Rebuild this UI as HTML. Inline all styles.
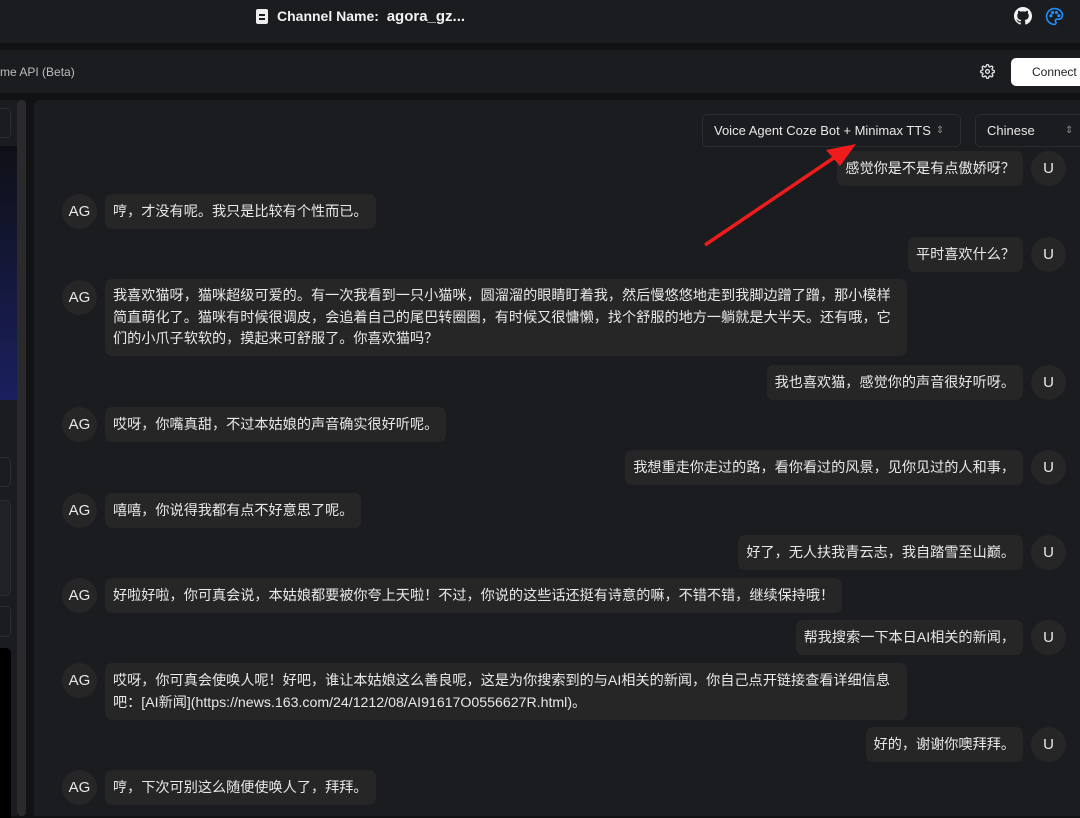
<!DOCTYPE html>
<html><head><meta charset="utf-8"><style>
*{margin:0;padding:0;box-sizing:border-box}
body{width:1080px;height:816px;overflow:hidden;background:#111214;font-family:"Liberation Sans","Noto Sans CJK SC",sans-serif;color:#e6e6e6;position:relative}
.abs{position:absolute}
.top{left:0;top:0;width:1080px;height:43px;background:#1b1c20}
.bar2{left:0;top:50px;width:1080px;height:43px;background:#1b1c20}
.chat{left:34px;top:100px;width:1046px;height:716px;background:#1b1c20;border-radius:6px 0 0 0}
.lp{left:0;top:100px;width:17px;height:716px;background:#1b1c20}
.sb{left:17px;top:100px;width:9px;height:716px;background:#2a2a2c;border-radius:4px}
.b{position:absolute;background:#262626;border-radius:7px;padding:0 8px;font-size:14.15px;line-height:21.5px;color:#e8e8e8;white-space:nowrap;display:flex;align-items:center}
.m{display:block;padding-top:6px}
.av{position:absolute;width:35px;height:35px;border-radius:50%;background:#262626;color:#e8e8e8;font-size:15px;display:flex;align-items:center;justify-content:center}
.u{left:1031px}.a{left:62px}
.sel{position:absolute;top:114px;height:33px;border:1px solid #2c2d31;border-radius:5px;background:#1b1c20;font-size:13px;color:#e8e8e8;display:flex;align-items:center;padding-left:11px}
</style></head><body>
<div class="abs top"></div>
<div class="abs" style="left:256px;top:9px;width:12px;height:15px;background:#eee;border-radius:2px"></div>
<div class="abs" style="left:259px;top:14px;width:6px;height:1.5px;background:#1b1c20"></div>
<div class="abs" style="left:259px;top:18px;width:6px;height:1.5px;background:#1b1c20"></div>
<div class="abs" style="left:277px;top:8px;font-size:14px;font-weight:bold;color:#f2f2f2">Channel Name:&nbsp; <span style="font-size:15px">agora_gz...</span></div>
<svg class="abs" style="left:1014px;top:7px" width="18" height="18" viewBox="0 0 16 16"><path fill="#f2f2f2" d="M8 0C3.58 0 0 3.580 0 8c0 3.54 2.29 6.53 5.47 7.59.4.07.55-.17.55-.38 0-.19-.01-.82-.01-1.49-2.01.37-2.53-.49-2.69-.94-.09-.23-.48-.94-.82-1.13-.28-.15-.68-.52-.01-.53.63-.01 1.08.58 1.23.82.72 1.21 1.87.87 2.33.66.07-.52.28-.87.51-1.07-1.78-.2-3.64-.89-3.64-3.95 0-.87.31-1.59.82-2.15-.08-.2-.36-1.02.08-2.12 0 0 .67-.21 2.2.82.64-.18 1.32-.27 2-.27s1.36.09 2 .27c1.53-1.04 2.2-.82 2.2-.82.44 1.1.16 1.92.08 2.12.51.56.82 1.27.82 2.15 0 3.07-1.87 3.75-3.65 3.95.29.25.54.73.54 1.48 0 1.07-.01 1.93-.01 2.2 0 .21.15.46.55.38A8.01 8.01 0 0016 8c0-4.42-3.58-8-8-8z"/></svg>
<svg class="abs" style="left:1045px;top:7px" width="19" height="19" viewBox="0 0 24 24" fill="none" stroke="#1e90ff" stroke-width="2"><path d="M12 2a10 10 0 000 20c1.1 0 2-.9 2-2 0-.5-.2-1-.5-1.3-.3-.4-.5-.8-.5-1.3 0-1.1.9-2 2-2h2.4c3 0 4.6-2.4 4.6-5C22 5.6 17.5 2 12 2z"/><circle cx="7.5" cy="11" r="1"/><circle cx="9.5" cy="7" r="1"/><circle cx="14.5" cy="7" r="1"/><circle cx="17.5" cy="11" r="1"/></svg>
<div class="abs bar2"></div>
<div class="abs" style="left:0;top:65px;font-size:12px;color:#bdbdbd">me API (Beta)</div>
<svg class="abs" style="left:980px;top:64px" width="15" height="15" viewBox="0 0 24 24" fill="none" stroke="#eee" stroke-width="2"><circle cx="12" cy="12" r="3"/><path d="M19.4 15a1.7 1.7 0 00.3 1.8l.1.1a2 2 0 11-2.8 2.8l-.1-.1a1.7 1.7 0 00-1.8-.3 1.7 1.7 0 00-1 1.5V21a2 2 0 11-4 0v-.1a1.7 1.7 0 00-1.1-1.5 1.7 1.7 0 00-1.8.3l-.1.1a2 2 0 11-2.8-2.8l.1-.1a1.7 1.7 0 00.3-1.8 1.7 1.7 0 00-1.5-1H3a2 2 0 110-4h.1a1.7 1.7 0 001.5-1.1 1.7 1.7 0 00-.3-1.8l-.1-.1a2 2 0 112.8-2.8l.1.1a1.7 1.7 0 001.8.3H9a1.7 1.7 0 001-1.5V3a2 2 0 114 0v.1a1.7 1.7 0 001 1.5 1.7 1.7 0 001.8-.3l.1-.1a2 2 0 112.8 2.8l-.1.1a1.7 1.7 0 00-.3 1.8V9a1.7 1.7 0 001.5 1H21a2 2 0 110 4h-.1a1.7 1.7 0 00-1.5 1z"/></svg>
<div class="abs" style="left:1011px;top:58px;width:80px;height:28px;background:#fff;border-radius:5px;color:#222;font-size:12px;padding:7px 0 0 21px">Connect</div>
<div class="abs lp"><div style="position:absolute;left:0;top:46px;width:17px;height:254px;background:linear-gradient(#0f1016,#1a1f5e)"></div>
<div style="position:absolute;left:0;top:357px;width:11px;height:30px;border:1px solid #2c2d31;border-left:none;border-radius:0 5px 5px 0"></div>
<div style="position:absolute;left:0;top:400px;width:11px;height:96px;border:1px solid #2c2d31;border-left:none;background:#202125;border-radius:0 5px 5px 0"></div>
<div style="position:absolute;left:0;top:506px;width:11px;height:31px;border:1px solid #2c2d31;border-left:none;border-radius:0 5px 5px 0"></div>
<div style="position:absolute;left:0;top:548px;width:11px;height:170px;background:#000;border-radius:0 5px 0 0"></div>
<div style="position:absolute;left:0;top:8px;width:11px;height:30px;border:1px solid #2c2d31;border-left:none;border-radius:0 5px 5px 0"></div></div>
<div class="abs sb"></div>
<div class="abs chat"></div>
<div class="sel" style="left:702px;width:259px">Voice Agent Coze Bot + Minimax TTS <span style="color:#888;font-size:10px;margin-left:5px">⇕</span></div>
<div class="sel" style="left:975px;width:110px">Chinese<span style="color:#888;font-size:10px;position:absolute;left:89px">⇕</span></div>

<div class="b" style="right:57px;top:151px;height:35px">感觉你是不是有点傲娇呀？</div><div class="av u" style="top:151px">U</div>
<div class="av a" style="top:194px">AG</div><div class="b" style="left:105px;top:194px;height:35px">哼，才没有呢。我只是比较有个性而已。</div>
<div class="b" style="right:57px;top:237px;height:35px">平时喜欢什么？</div><div class="av u" style="top:237px">U</div>
<div class="av a" style="top:280px">AG</div><div class="b m" style="left:105px;top:279px;height:77px;width:802px">我喜欢猫呀，猫咪超级可爱的。有一次我看到一只小猫咪，圆溜溜的眼睛盯着我，然后慢悠悠地走到我脚边蹭了蹭，那小模样<br>简直萌化了。猫咪有时候很调皮，会追着自己的尾巴转圈圈，有时候又很慵懒，找个舒服的地方一躺就是大半天。还有哦，它<br>们的小爪子软软的，摸起来可舒服了。你喜欢猫吗？</div>
<div class="b" style="right:57px;top:365px;height:35px">我也喜欢猫，感觉你的声音很好听呀。</div><div class="av u" style="top:365px">U</div>
<div class="av a" style="top:407px">AG</div><div class="b" style="left:105px;top:407px;height:35px">哎呀，你嘴真甜，不过本姑娘的声音确实很好听呢。</div>
<div class="b" style="right:57px;top:450px;height:35px">我想重走你走过的路，看你看过的风景，见你见过的人和事，</div><div class="av u" style="top:450px">U</div>
<div class="av a" style="top:493px">AG</div><div class="b" style="left:105px;top:493px;height:35px">嘻嘻，你说得我都有点不好意思了呢。</div>
<div class="b" style="right:57px;top:535px;height:35px">好了，无人扶我青云志，我自踏雪至山巅。</div><div class="av u" style="top:535px">U</div>
<div class="av a" style="top:578px">AG</div><div class="b" style="left:105px;top:578px;height:35px">好啦好啦，你可真会说，本姑娘都要被你夸上天啦！不过，你说的这些话还挺有诗意的嘛，不错不错，继续保持哦！</div>
<div class="b" style="right:57px;top:620px;height:35px">帮我搜索一下本日AI相关的新闻，</div><div class="av u" style="top:620px">U</div>
<div class="av a" style="top:663px">AG</div><div class="b m" style="left:105px;top:663px;height:57px;width:802px;padding-top:7px">哎呀，你可真会使唤人呢！好吧，谁让本姑娘这么善良呢，这是为你搜索到的与AI相关的新闻，你自己点开链接查看详细信息<br>吧：[AI新闻](https://news.163.com/24/1212/08/AI91617O0556627R.html)。</div>
<div class="b" style="right:57px;top:727px;height:35px">好的，谢谢你噢拜拜。</div><div class="av u" style="top:727px">U</div>
<div class="av a" style="top:770px">AG</div><div class="b" style="left:105px;top:770px;height:35px">哼，下次可别这么随便使唤人了，拜拜。</div>

<svg class="abs" style="left:0;top:0" width="1080" height="816"><line x1="705" y1="245" x2="838" y2="155" stroke="#ee1c1c" stroke-width="3.5"/><polygon points="856,144 826,150 840,166" fill="#ee1c1c"/></svg>
</body></html>
